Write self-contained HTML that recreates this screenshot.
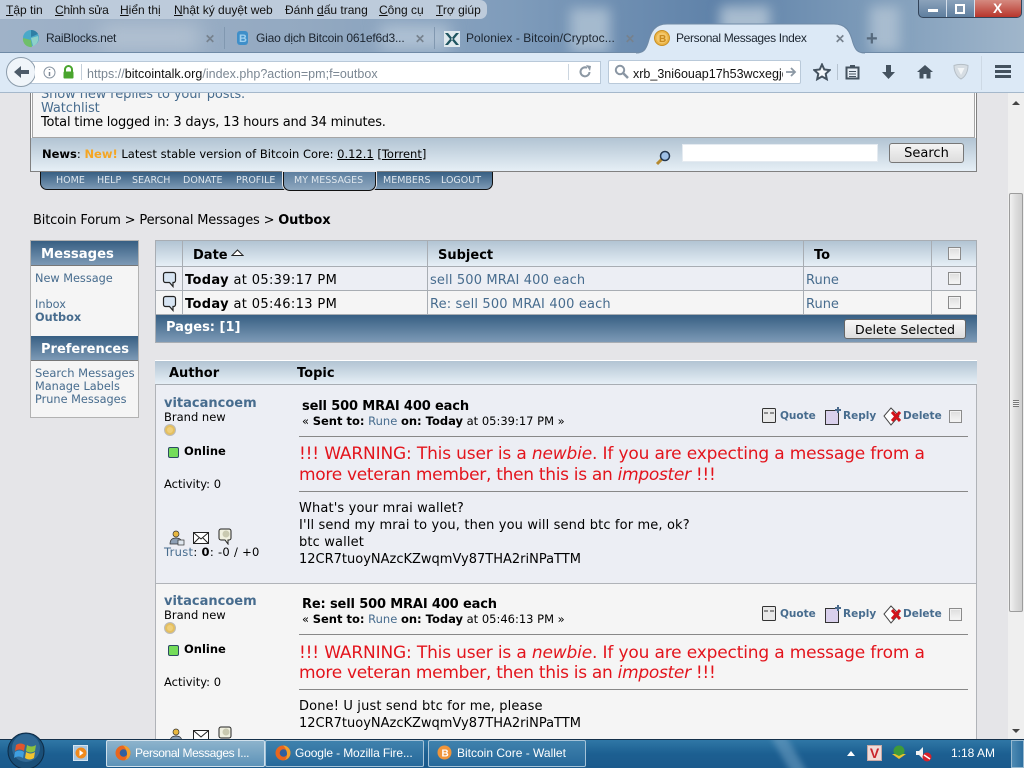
<!DOCTYPE html>
<html><head><meta charset="utf-8"><title>Personal Messages Index</title>
<style>
html,body{margin:0;padding:0;width:1024px;height:768px;overflow:hidden;background:#e5e5e8}
#r{position:relative;width:1024px;height:768px;overflow:hidden;font-family:"DejaVu Sans","Liberation Sans",sans-serif;font-size:13px;color:#000}
.a{position:absolute;white-space:nowrap}
.b{position:absolute}
.c{font-family:"Liberation Sans","Noto Sans CJK SC",sans-serif}
.l{color:#476c8e}
.g{font-weight:bold}
.hd{background:linear-gradient(#b2c4d3,#e6eff6)}
.dk{background:linear-gradient(#375f83,#7d9ab6)}
.cb{position:absolute;width:11px;height:11px;border:1px solid #8b8b8b;background:linear-gradient(#ddd,#f6f6f6);box-shadow:inset 0 0 0 1px #f2f2f2}
.tab{font-size:12px;color:#1c2530}
.x{position:absolute;font-size:12px;font-weight:bold;color:#76818d;font-family:"Liberation Sans",sans-serif}
.m{font-size:12px;color:#111;top:3px}
.nv{font-size:9.5px;color:#dfe7ee;top:175px}
u{text-decoration:underline}
.w{color:#e3141c;font-size:17px}
.act{font-size:10.5px;font-weight:bold;color:#476c8e}
.sb{font-size:11.3px;color:#476c8e}
.s1{letter-spacing:-.16px}
.s2{letter-spacing:-.29px}
.bd{letter-spacing:.14px}
.tm{letter-spacing:.35px}
.sj{letter-spacing:.15px}
</style></head><body><div id="r">

<!-- window chrome background -->
<div class="b" style="left:0;top:0;width:1024px;height:53px;background:linear-gradient(90deg,#9fb2c8 0,#93a9c1 30%,#7f9cbb 50%,#5f82a9 70%,#7d9bb9 85%,#a0b6cb 100%);overflow:hidden">
 <div class="b" style="left:570px;top:8px;width:40px;height:45px;background:#a5bace;filter:blur(6px)"></div>
 <div class="b" style="left:720px;top:6px;width:50px;height:45px;background:#a8bccf;filter:blur(6px)"></div>
 <div class="b" style="left:870px;top:6px;width:30px;height:45px;background:#a8bccf;filter:blur(6px)"></div>
 <div class="b" style="left:380px;top:25px;width:70px;height:25px;background:#b0c2d4;filter:blur(8px)"></div>
 <div class="b" style="left:100px;top:25px;width:100px;height:25px;background:#b3c2d2;filter:blur(10px)"></div>
</div>
<div class="b" style="left:0;top:0;width:487px;height:19px;background:#bdcbdb;border-radius:0 7px 7px 0"></div>
<span class="a c m" style="left:6px"><u>T</u>ập tin</span>
<span class="a c m" style="left:55px;letter-spacing:-.2px"><u>C</u>hỉnh sửa</span>
<span class="a c m" style="left:120px"><u>H</u>iển thị</span>
<span class="a c m" style="left:174px"><u>N</u>hật ký duyệt web</span>
<span class="a c m" style="left:285px">Đánh <u>d</u>ấu trang</span>
<span class="a c m" style="left:379px"><u>C</u>ông cụ</span>
<span class="a c m" style="left:436px"><u>T</u>rợ giúp</span>

<!-- window controls -->
<div class="b" style="left:918px;top:0;width:102px;height:17px;border:1px solid #33445a;border-top:0;border-radius:0 0 5px 5px;background:linear-gradient(#8ba2bb,#5f7f9f);overflow:hidden">
 <div class="b" style="left:27px;top:0;width:1px;height:17px;background:#d5deea"></div>
 <div class="b" style="left:55px;top:0;width:1px;height:17px;background:#d5deea"></div>
 <div class="b" style="left:56px;top:0;width:46px;height:17px;background:linear-gradient(#d58a80,#b8362c)"></div>
 <div class="b" style="left:9px;top:9px;width:10px;height:3px;background:#fff"></div>
 <div class="b" style="left:36px;top:4px;width:6px;height:6px;border:2px solid #fff;background:#7d94ad"></div>
 <span class="a c" style="left:74px;top:0;color:#fff;font-weight:bold;font-size:14px">X</span>
</div>

<!-- tabs -->
<svg class="b" style="left:22px;top:29px" width="19" height="19" viewBox="0 0 19 19"><circle cx="9" cy="9" r="8" fill="#4aa9c9"/><path d="M9 1a8 8 0 0 1 7 4L9 8z" fill="#2f7fa5"/><path d="M1 9l8 2 1 7a8 8 0 0 1-9-9z" fill="#6fbf6a"/><path d="M9 9l7-2a8 8 0 0 1-5 10z" fill="#8ed1c9"/></svg>
<span class="a c tab" style="left:46px;top:31px;letter-spacing:-.25px">RaiBlocks.net</span>
<span class="x" style="left:205px;top:32px">✕</span>
<div class="b" style="left:224px;top:27px;width:1px;height:22px;background:#8198b0"></div>
<svg class="b" style="left:236px;top:30px" width="14" height="16"><rect x="1" y="1" width="11" height="14" rx="3" fill="#3f8fc9"/><text x="3" y="12" font-size="11" font-weight="bold" fill="#9fd0ef" font-family="Liberation Sans">B</text></svg>
<span class="a c tab" style="left:256px;top:31px;letter-spacing:-.17px">Giao dịch Bitcoin 061ef6d3...</span>
<span class="x" style="left:415px;top:32px">✕</span>
<div class="b" style="left:434px;top:27px;width:1px;height:22px;background:#8198b0"></div>
<svg class="b" style="left:444px;top:31px" width="16" height="16"><rect width="16" height="16" fill="#dfe9ee"/><path d="M1 2l5 6-5 6h3l5-6-5-6zM15 2l-5 6 5 6h-3L7 8l5-6z" fill="#1f5560"/></svg>
<span class="a c tab" style="left:466px;top:31px;letter-spacing:.05px">Poloniex - Bitcoin/Cryptoc...</span>
<span class="x" style="left:625px;top:32px">✕</span>
<span class="a c" style="left:866px;top:28px;font-size:20px;font-weight:bold;color:#56697c">+</span>

<!-- nav bar -->
<div class="b" style="left:0;top:52px;width:1024px;height:41px;background:#dce9f6;border-top:1px solid #6f8aa6;border-bottom:1px solid #a5b8cb;box-sizing:border-box;z-index:1"></div>
<div class="b" style="z-index:2;left:0;top:0;width:1024px;height:93px;pointer-events:none">
 <svg class="b" style="left:636px;top:23px" width="230" height="31"><path d="M0 30C8 30 10 26 12 20C15 8 19 1 31 1H198C210 1 214 8 217 20C219 26 221 30 229 30V31H0Z" fill="#dce9f6"/><path d="M0 30C8 30 10 26 12 20C15 8 19 1 31 1H198C210 1 214 8 217 20C219 26 221 30 229 30" fill="none" stroke="#6f8aa6"/></svg>
 <svg class="b" style="left:654px;top:30px" width="16" height="16"><circle cx="8" cy="8" r="7.500" fill="#eab345" stroke="#c98f22"/><circle cx="8" cy="8" r="5.500" fill="#f3c76a"/><text x="5" y="12" font-size="10" font-weight="bold" fill="#c98a1e" font-family="Liberation Sans">B</text></svg>
 <span class="a c tab" style="left:676px;top:31px;letter-spacing:-.33px">Personal Messages Index</span>
 <span class="x" style="left:835px;top:32px">✕</span>
 <div class="b" style="left:20px;top:61px;width:548px;height:21px;background:#fff;border:1px solid #b9c9d9;border-radius:2px"></div>
 <div class="b" style="left:568px;top:61px;width:32px;height:21px;background:#fff;border:1px solid #b9c9d9;border-left:0;box-sizing:content-box"></div>
 <div class="b" style="left:568px;top:64px;width:1px;height:16px;background:#ccd6e0"></div>
 <svg class="b" style="left:5px;top:56px" width="30" height="32"><circle cx="16" cy="16" r="14.500" fill="#f0f5fa" stroke="#8c9cab"/><path d="M9 16l7-6v4h8v4h-8v4z" fill="#4d5b69"/></svg>
 <svg class="b" style="left:43px;top:66px" width="13" height="13"><circle cx="6.500" cy="6.500" r="5.500" fill="#fff" stroke="#8a96a3"/><path d="M6.500 3v1M6.500 6v4" stroke="#7a8693" stroke-width="1.500"/></svg>
 <svg class="b" style="left:62px;top:65px" width="13" height="14"><path d="M3 7V4.500a3.500 3.500 0 0 1 7 0V7" fill="none" stroke="#4aa52e" stroke-width="2"/><rect x="1.500" y="6.500" width="10" height="7" rx="1" fill="#4aa52e"/></svg>
 <div class="b" style="left:81px;top:64px;width:1px;height:16px;background:#c3ced9"></div>
 <span class="a c" style="left:87px;top:67px;font-size:12.500px;letter-spacing:.03px;color:#7b8793">https://<span style="color:#111">bitcointalk.org</span>/index.php?action=pm;f=outbox</span>
 <svg class="b" style="left:578px;top:65px" width="14" height="14"><path d="M11.500 7A4.500 4.500 0 1 1 9 2.800" fill="none" stroke="#8c98a4" stroke-width="2"/><path d="M8 0l5 1-1 5z" fill="#8c98a4"/></svg>
 <div class="b" style="left:608px;top:60px;width:191px;height:22px;background:#fff;border:1px solid #b9c9d9;border-radius:2px"></div>
 <svg class="b" style="left:614px;top:64px" width="16" height="15"><circle cx="6" cy="6" r="4.200" fill="none" stroke="#8a96a3" stroke-width="2"/><path d="M9 9l5 5" stroke="#8a96a3" stroke-width="2.500"/></svg>
 <span class="a c" style="left:633px;top:67px;width:150px;overflow:hidden;font-size:12.500px;color:#111">xrb_3ni6ouap17h53wcxegjd7</span>
 <svg class="b" style="left:785px;top:66px" width="12" height="12"><path d="M1 6h8M6 2l4 4-4 4" fill="none" stroke="#8c98a4" stroke-width="1.800"/></svg>
 <svg class="b" style="left:813px;top:63px" width="18" height="18" viewBox="0 0 18 18"><path d="M9 1.500l2.300 5 5.400.6-4 3.700 1.100 5.400L9 13.500 4.200 16.200l1.100-5.400-4-3.700 5.400-.6z" fill="#f3f7fb" stroke="#44525f" stroke-width="2"/></svg>
 <div class="b" style="left:837px;top:64px;width:1px;height:16px;background:#b7c4d1"></div>
 <svg class="b" style="left:845px;top:64px" width="15" height="16"><path d="M1.500 3.500h12v11h-12z" fill="#e6eef6" stroke="#44525f" stroke-width="2"/><rect x="5" y="1" width="5" height="3" fill="#44525f"/><path d="M4 7.500h7M4 10h7M4 12.500h7" stroke="#44525f"/></svg>
 <svg class="b" style="left:881px;top:64px" width="15" height="16"><path d="M5 1h5v7h4l-6.500 7L1 8h4z" fill="#44525f"/></svg>
 <svg class="b" style="left:917px;top:64px" width="16" height="15"><path d="M8 1L0 8h2.500v6.500h4V10h3v4.500h4V8H16z" fill="#44525f"/></svg>
 <svg class="b" style="left:953px;top:63px" width="16" height="17"><path d="M1 2.500C5 1 11 1 15 2.500 15 9 12 14 8 16 4 14 1 9 1 2.500z" fill="#d6dde3" stroke="#b5bec6"/><path d="M4.500 5h7L8 12z" fill="#f2f5f7"/></svg>
 <div class="b" style="left:981px;top:56px;width:1px;height:34px;background:#cdd9e5"></div>
 <div class="b" style="left:995px;top:65px;width:16px;height:3px;background:#44525f"></div>
 <div class="b" style="left:995px;top:70px;width:16px;height:3px;background:#44525f"></div>
 <div class="b" style="left:995px;top:75px;width:16px;height:3px;background:#44525f"></div>
</div>

<!-- scrollbar -->
<div class="b" style="left:1008px;top:93px;width:16px;height:646px;background:#efefef"></div>
<div class="b" style="left:1009px;top:193px;width:14px;height:419px;background:linear-gradient(90deg,#f1f1f1,#dcdcdc,#cfcfcf);border:1px solid #9c9c9c;border-radius:2px;box-sizing:border-box"></div>
<div class="b" style="left:1013px;top:400px;width:6px;height:7px;background:repeating-linear-gradient(#777 0 1px,#eee 1px 2px)"></div>
<div class="b" style="left:1012px;top:101px;border:4px solid transparent;border-top:0;border-bottom:4px solid #444"></div>
<div class="b" style="left:1012px;top:729px;border:4px solid transparent;border-bottom:0;border-top:4px solid #444"></div>

<!-- top user box -->
<div class="b" style="left:30px;top:93px;width:947px;height:79px;background:#fff;border:1px solid #808080;border-top:0;box-sizing:border-box"></div>
<div class="b" style="left:32px;top:93px;width:943px;height:45px;background:#f5f5f5;border-left:1px solid #a5a5a5;border-right:1px solid #a5a5a5;border-bottom:1px solid #a5a5a5;box-sizing:border-box;overflow:hidden">
 <span class="a l" style="left:8px;top:-6px;letter-spacing:-.1px">Show new replies to your posts.</span>
 <span class="a l" style="left:8px;top:8px;letter-spacing:-.1px">Watchlist</span>
 <span class="a" style="left:8px;top:22px;letter-spacing:-.2px">Total time logged in: 3 days, 13 hours and 34 minutes.</span>
</div>
<div class="b hd" style="left:31px;top:138px;width:945px;height:33px"></div>
<span class="a" style="left:42px;top:147px;font-size:11.500px"><b>News</b>: <b style="color:#f5a623">New!</b> Latest stable version of Bitcoin Core: <u>0.12.1</u> [<u>Torrent</u>]</span>
<svg class="b" style="left:655px;top:149px" width="16" height="17"><path d="M2 15l6-6" stroke="#b5892f" stroke-width="3"/><circle cx="10" cy="7" r="4.500" fill="#9fc0e6" stroke="#24374f" stroke-width="1.500"/></svg>
<div class="b" style="left:682px;top:144px;width:196px;height:18px;background:#fff;border:1px solid #e5ebf1;box-sizing:border-box"></div>
<div class="b" style="left:889px;top:143px;width:75px;height:20px;background:linear-gradient(#f4f4f4,#ddd);border:1px solid #777;border-radius:3px;box-sizing:border-box;text-align:center;line-height:20px">Search</div>

<!-- menu -->
<div class="b dk" style="left:40px;top:172px;width:453px;height:18px;border:1px solid #111;border-top:0;border-radius:0 0 7px 7px;box-sizing:border-box"></div>
<div class="b" style="left:283px;top:172px;width:93px;height:19px;background:linear-gradient(#5d7f9f,#8ea7bf);border:1px solid #111;border-top:0;border-radius:0 0 7px 7px;box-sizing:border-box;box-shadow:0 0 0 1px #e5e5e8"></div>
<span class="a nv" style="left:56px">HOME</span>
<span class="a nv" style="left:97px">HELP</span>
<span class="a nv" style="left:132px">SEARCH</span>
<span class="a nv" style="left:183px">DONATE</span>
<span class="a nv" style="left:236px">PROFILE</span>
<span class="a nv" style="left:294px">MY MESSAGES</span>
<span class="a nv" style="left:383px">MEMBERS</span>
<span class="a nv" style="left:441px">LOGOUT</span>

<!-- breadcrumb -->
<span class="a" style="left:33px;top:213px;letter-spacing:-.17px">Bitcoin Forum &gt; Personal Messages &gt; <b>Outbox</b></span>

<!-- sidebar -->
<div class="b" style="left:30px;top:240px;width:109px;height:178px;background:#f5f5f5;border:1px solid #b2b2b2;box-sizing:border-box"></div>
<div class="b dk" style="left:31px;top:241px;width:107px;height:25px;border-bottom:1px solid #777;box-sizing:border-box"></div>
<span class="a g" style="left:41px;top:247px;color:#fff;font-size:13.200px">Messages</span>
<div class="b dk" style="left:31px;top:336px;width:107px;height:25px;border-bottom:1px solid #777;box-sizing:border-box"></div>
<span class="a g" style="left:41px;top:342px;color:#fff;font-size:13px">Preferences</span>
<span class="a sb" style="left:35px;top:272px">New Message</span>
<span class="a sb" style="left:35px;top:298px">Inbox</span>
<span class="a sb g" style="left:35px;top:311px">Outbox</span>
<span class="a sb" style="left:35px;top:366px;font-size:11.500px">Search Messages</span>
<span class="a sb" style="left:35px;top:380px">Manage Labels</span>
<span class="a sb" style="left:35px;top:393px">Prune Messages</span>

<!-- PM table -->
<div class="b" style="left:155px;top:240px;width:822px;height:103px;background:#a8adb3"></div>
<div class="b hd" style="left:156px;top:241px;width:820px;height:25px"></div>
<div class="b" style="left:156px;top:267px;width:820px;height:23px;background:#eceef4"></div>
<div class="b" style="left:156px;top:291px;width:820px;height:23px;background:#f5f5f5"></div>
<div class="b dk" style="left:156px;top:315px;width:821px;height:27px"></div>
<div class="b" style="left:182px;top:241px;width:1px;height:74px;background:#a8adb3"></div>
<div class="b" style="left:427px;top:241px;width:1px;height:74px;background:#a8adb3"></div>
<div class="b" style="left:803px;top:241px;width:1px;height:74px;background:#a8adb3"></div>
<div class="b" style="left:931px;top:241px;width:1px;height:74px;background:#a8adb3"></div>
<span class="a g" style="left:193px;top:248px">Date</span>
<svg class="b" style="left:231px;top:249px" width="13" height="8"><path d="M1 6.500L6.500 1 12 6.500z" fill="#fff" stroke="#222"/></svg>
<span class="a g" style="left:438px;top:248px">Subject</span>
<span class="a g" style="left:814px;top:248px">To</span>
<div class="cb" style="left:948px;top:247px"></div>
<svg class="b" style="left:162px;top:271px" width="15" height="17"><path d="M3.500 1.500h8a2 2 0 0 1 2 2v6a2 2 0 0 1-2 2H11v4l-3.500-4h-4a2 2 0 0 1-2-2v-6a2 2 0 0 1 2-2z" fill="#d7e4f2" stroke="#222" stroke-width="1.200"/></svg>
<svg class="b" style="left:162px;top:295px" width="15" height="17"><path d="M3.500 1.500h8a2 2 0 0 1 2 2v6a2 2 0 0 1-2 2H11v4l-3.500-4h-4a2 2 0 0 1-2-2v-6a2 2 0 0 1 2-2z" fill="#d7e4f2" stroke="#222" stroke-width="1.200"/></svg>
<span class="a tm" style="left:185px;top:273px"><b>Today</b> at 05:39:17 PM</span>
<span class="a tm" style="left:185px;top:297px"><b>Today</b> at 05:46:13 PM</span>
<span class="a l sj" style="left:430px;top:273px">sell 500 MRAI 400 each</span>
<span class="a l sj" style="left:430px;top:297px">Re: sell 500 MRAI 400 each</span>
<span class="a l" style="left:806px;top:273px">Rune</span>
<span class="a l" style="left:806px;top:297px">Rune</span>
<div class="cb" style="left:948px;top:272px"></div>
<div class="cb" style="left:948px;top:296px"></div>
<span class="a g" style="left:166px;top:320px;color:#fff">Pages: [1]</span>
<div class="b" style="left:844px;top:319px;width:122px;height:20px;background:linear-gradient(#f8f8f8,#ddd);border:1px solid #666;border-radius:3px;box-sizing:border-box;text-align:center;line-height:20px;font-size:12.600px">Delete Selected</div>

<!-- author bar -->
<div class="b hd" style="left:155px;top:360px;width:822px;height:24px;border-top:1px solid #fff;box-sizing:border-box"></div>
<span class="a g" style="left:169px;top:366px">Author</span>
<span class="a g" style="left:297px;top:366px">Topic</span>

<!-- posts -->
<div class="b" style="left:155px;top:384px;width:822px;height:200px;background:#eceef4;border:1px solid #b0b3b8;border-top:1px solid #a8adb3;box-sizing:border-box"></div>
<div class="b" style="left:155px;top:583px;width:822px;height:157px;background:#f5f5f5;border:1px solid #b0b3b8;border-bottom:0;box-sizing:border-box"></div>

<!-- post 1 -->
<span class="a g l" style="left:164px;top:396px">vitacancoem</span>
<span class="a" style="left:164px;top:410px;font-size:11.500px">Brand new</span>
<svg class="b" style="left:164px;top:424px" width="12" height="12"><circle cx="6" cy="6" r="5.500" fill="#e4bf60" stroke="#bbb"/><circle cx="6" cy="6" r="3" fill="#efcf7a"/></svg>
<div class="b" style="left:168px;top:447px;width:9px;height:9px;background:#74dc5a;border:1.500px solid #2c4a63;border-radius:2px"></div>
<span class="a g" style="left:184px;top:444px;font-size:11.500px">Online</span>
<span class="a" style="left:164px;top:477px;font-size:11.500px">Activity: 0</span>
<svg class="b" style="left:169px;top:530px" width="16" height="16"><circle cx="7" cy="4" r="3" fill="#e8b73f" stroke="#333" stroke-width=".7"/><path d="M1 14c0-5 3-6 6-6s6 1 6 6z" fill="#8d9fb4" stroke="#333" stroke-width=".7"/><rect x="9" y="10" width="6" height="5" fill="#dfe7ef" stroke="#333" stroke-width=".7"/></svg>
<svg class="b" style="left:193px;top:532px" width="17" height="13"><rect x=".5" y=".5" width="15" height="11" fill="#fff" stroke="#222"/><path d="M1 1l7 6 7-6M1 11l5-5M15 11l-5-5" fill="none" stroke="#222"/></svg>
<svg class="b" style="left:218px;top:528px" width="15" height="17"><path d="M3 1h8a2 2 0 0 1 2 2v7a2 2 0 0 1-2 2h-1v4l-3-4H3a2 2 0 0 1-2-2V3a2 2 0 0 1 2-2z" fill="#f0f0e0" stroke="#222"/><circle cx="8" cy="6" r="3.500" fill="#c9c9b0"/></svg>
<span class="a" style="left:164px;top:545px;font-size:11.500px;letter-spacing:.3px"><span class="l">Trust</span>: <b>0</b>: -0 / +0</span>

<span class="a g" style="left:302px;top:399px;letter-spacing:-.15px">sell 500 MRAI 400 each</span>
<span class="a" style="left:302px;top:414px;font-size:11.500px">« <b>Sent to:</b> <span class="l">Rune</span> <b>on: Today</b> at 05:39:17 PM »</span>
<svg class="b" style="left:762px;top:408px" width="14" height="16"><rect x=".5" y=".5" width="13" height="14" rx="1" fill="#e8e8e8" stroke="#333"/><path d="M3 4v2M5 4v2M9 4v2M11 4v2" stroke="#333"/></svg>
<span class="a act" style="left:780px;top:410px">Quote</span>
<svg class="b" style="left:825px;top:406px" width="18" height="19"><path d="M.5 4.500h10l3 0v14H.5z" fill="#d9d0ec" stroke="#333"/><path d="M13 1v6M10 4h6" stroke="#4a6a8c" stroke-width="2"/></svg>
<span class="a act" style="left:843px;top:410px">Reply</span>
<svg class="b" style="left:883px;top:407px" width="20" height="20"><path d="M8 1L1 9l7 9 8-9z" fill="#fff" stroke="#444"/><path d="M9 5l8 9M17 5l-8 9" stroke="#d2121a" stroke-width="3"/></svg>
<span class="a act" style="left:903px;top:410px">Delete</span>
<div class="cb" style="left:949px;top:410px"></div>
<div class="b" style="left:299px;top:436px;width:669px;height:1px;background:#888"></div>
<span class="a w s1" style="left:299px;top:444px">!!! WARNING: This user is a <i>newbie</i>. If you are expecting a message from a</span>
<span class="a w s2" style="left:299px;top:465px">more veteran member, then this is an <i>imposter</i> !!!</span>
<div class="b" style="left:299px;top:491px;width:669px;height:1px;background:#888"></div>
<span class="a bd" style="left:299px;top:501px">What's your mrai wallet?</span>
<span class="a bd" style="left:299px;top:518px">I'll send my mrai to you, then you will send btc for me, ok?</span>
<span class="a bd" style="left:299px;top:535px">btc wallet</span>
<span class="a" style="left:299px;top:552px">12CR7tuoyNAzcKZwqmVy87THA2riNPaTTM</span>

<!-- post 2 -->
<span class="a g l" style="left:164px;top:594px">vitacancoem</span>
<span class="a" style="left:164px;top:608px;font-size:11.500px">Brand new</span>
<svg class="b" style="left:164px;top:622px" width="12" height="12"><circle cx="6" cy="6" r="5.500" fill="#e4bf60" stroke="#bbb"/><circle cx="6" cy="6" r="3" fill="#efcf7a"/></svg>
<div class="b" style="left:168px;top:645px;width:9px;height:9px;background:#74dc5a;border:1.500px solid #2c4a63;border-radius:2px"></div>
<span class="a g" style="left:184px;top:642px;font-size:11.500px">Online</span>
<span class="a" style="left:164px;top:675px;font-size:11.500px">Activity: 0</span>
<svg class="b" style="left:169px;top:728px" width="16" height="16"><circle cx="7" cy="4" r="3" fill="#e8b73f" stroke="#333" stroke-width=".7"/><path d="M1 14c0-5 3-6 6-6s6 1 6 6z" fill="#8d9fb4" stroke="#333" stroke-width=".7"/></svg>
<svg class="b" style="left:193px;top:730px" width="17" height="13"><rect x=".5" y=".5" width="15" height="11" fill="#fff" stroke="#222"/><path d="M1 1l7 6 7-6" fill="none" stroke="#222"/></svg>
<svg class="b" style="left:218px;top:726px" width="15" height="17"><path d="M3 1h8a2 2 0 0 1 2 2v7a2 2 0 0 1-2 2H3a2 2 0 0 1-2-2V3a2 2 0 0 1 2-2z" fill="#f0f0e0" stroke="#222"/><circle cx="8" cy="6" r="3.500" fill="#c9c9b0"/></svg>

<span class="a g" style="left:302px;top:597px;letter-spacing:-.15px">Re: sell 500 MRAI 400 each</span>
<span class="a" style="left:302px;top:612px;font-size:11.500px">« <b>Sent to:</b> <span class="l">Rune</span> <b>on: Today</b> at 05:46:13 PM »</span>
<svg class="b" style="left:762px;top:606px" width="14" height="16"><rect x=".5" y=".5" width="13" height="14" rx="1" fill="#e8e8e8" stroke="#333"/><path d="M3 4v2M5 4v2M9 4v2M11 4v2" stroke="#333"/></svg>
<span class="a act" style="left:780px;top:608px">Quote</span>
<svg class="b" style="left:825px;top:604px" width="18" height="19"><path d="M.5 4.500h10l3 0v14H.5z" fill="#d9d0ec" stroke="#333"/><path d="M13 1v6M10 4h6" stroke="#4a6a8c" stroke-width="2"/></svg>
<span class="a act" style="left:843px;top:608px">Reply</span>
<svg class="b" style="left:883px;top:605px" width="20" height="20"><path d="M8 1L1 9l7 9 8-9z" fill="#fff" stroke="#444"/><path d="M9 5l8 9M17 5l-8 9" stroke="#d2121a" stroke-width="3"/></svg>
<span class="a act" style="left:903px;top:608px">Delete</span>
<div class="cb" style="left:949px;top:608px"></div>
<div class="b" style="left:299px;top:634px;width:669px;height:1px;background:#888"></div>
<span class="a w s1" style="left:299px;top:643px">!!! WARNING: This user is a <i>newbie</i>. If you are expecting a message from a</span>
<span class="a w s2" style="left:299px;top:663px">more veteran member, then this is an <i>imposter</i> !!!</span>
<div class="b" style="left:299px;top:689px;width:669px;height:1px;background:#888"></div>
<span class="a bd" style="left:299px;top:699px">Done! U just send btc for me, please</span>
<span class="a" style="left:299px;top:716px">12CR7tuoyNAzcKZwqmVy87THA2riNPaTTM</span>

<!-- taskbar -->
<div class="b" style="left:0;top:739px;width:1024px;height:29px;background:linear-gradient(#2f77a6,#1c5f91 50%,#1b5a8c);border-top:1px solid #14304a;box-sizing:border-box;overflow:hidden">
 <div class="b" style="left:785px;top:-10px;width:14px;height:60px;background:#6f9fc2;opacity:.55;transform:rotate(-30deg);filter:blur(3px)"></div>
</div>
<svg class="b" style="left:7px;top:732px" width="38" height="36" viewBox="0 0 38 36"><circle cx="19" cy="19" r="18" fill="#1a4f78" stroke="#0d2a44"/><circle cx="19" cy="16" r="14" fill="#3f7aa6" opacity=".6"/><path d="M9 13c3-2 6-2 9 0l-1 6c-3-2-6-2-9 0z" fill="#e2552c"/><path d="M20 13c3 2 6 2 9 0l-1 6c-3 2-6 2-9 0z" fill="#8cc13f"/><path d="M8 20c3-2 6-2 9 0l-1 6c-3-2-6-2-9 0z" fill="#3f9fe0"/><path d="M19 20c3 2 6 2 9 0l-1 6c-3 2-6 2-9 0z" fill="#f3c32f"/></svg>
<div class="b" style="left:73px;top:745px;width:15px;height:16px;background:#a7c6e0;border:1px solid #d6e5f0;box-sizing:border-box"></div>
<svg class="b" style="left:75px;top:747px" width="12" height="12"><circle cx="6" cy="6" r="5.500" fill="#f08a1c"/><path d="M4.500 3l4 3-4 3z" fill="#fff"/></svg>
<div class="b" style="left:106px;top:740px;width:159px;height:27px;background:linear-gradient(#8db3cc,#5d93b8);border:1px solid #cfe0ec;border-radius:2px;box-sizing:border-box"></div>
<div class="b" style="left:265px;top:740px;width:159px;height:27px;background:linear-gradient(#3f82ad,#27699a);border:1px solid #a5c3d8;border-radius:2px;box-sizing:border-box"></div>
<div class="b" style="left:428px;top:740px;width:158px;height:27px;background:linear-gradient(#3f82ad,#27699a);border:1px solid #a5c3d8;border-radius:2px;box-sizing:border-box"></div>
<svg class="b" style="left:115px;top:745px" width="16" height="16"><circle cx="8" cy="8" r="7.500" fill="#e8661f"/><circle cx="8.500" cy="8" r="3.800" fill="#2f5f9f"/><path d="M8 .5A7.500 7.500 0 0 1 15.500 8 7.500 7.500 0 0 1 10 15C13 12 13 5 8 .5z" fill="#f3a02c"/></svg>
<svg class="b" style="left:275px;top:745px" width="16" height="16"><circle cx="8" cy="8" r="7.500" fill="#e8661f"/><circle cx="8.500" cy="8" r="3.800" fill="#2f5f9f"/><path d="M8 .5A7.500 7.500 0 0 1 15.500 8 7.500 7.500 0 0 1 10 15C13 12 13 5 8 .5z" fill="#f3a02c"/></svg>
<svg class="b" style="left:437px;top:745px" width="15" height="15"><circle cx="7.500" cy="7.500" r="7" fill="#f0953a"/><text x="4.500" y="11.500" font-size="10" font-weight="bold" fill="#fff" font-family="Liberation Sans">B</text></svg>
<span class="a c" style="left:135px;top:746px;font-size:12px;letter-spacing:-.36px;color:#fff">Personal Messages I...</span>
<span class="a c" style="left:295px;top:746px;font-size:12px;letter-spacing:-.13px;color:#fff">Google - Mozilla Fire...</span>
<span class="a c" style="left:457px;top:746px;font-size:12px;color:#fff">Bitcoin Core - Wallet</span>
<div class="b" style="left:847px;top:751px;border:4px solid transparent;border-top:0;border-bottom:5px solid #fff"></div>
<div class="b" style="left:867px;top:745px;width:15px;height:16px;background:#f1dbd8;border:1px solid #c9a9a4;box-sizing:border-box;color:#c9242c;font:bold 14px/14px 'Liberation Sans';text-align:center">V</div>
<svg class="b" style="left:890px;top:745px" width="18" height="15"><circle cx="9" cy="6" r="5.500" fill="#3f9a3a"/><path d="M2 9l7 5 7-5-3 0-4 2-4-2z" fill="#e8c22f"/></svg>
<svg class="b" style="left:915px;top:746px" width="18" height="16"><path d="M1 5h3l4-4v12L4 9H1z" fill="#f2f2f2"/><circle cx="12" cy="11" r="4.500" fill="#d8212a"/><path d="M9 9l6 4" stroke="#fff" stroke-width="1.500"/></svg>
<span class="a c" style="left:951px;top:746px;font-size:12px;color:#fff">1:18 AM</span>
<div class="b" style="left:1011px;top:740px;width:13px;height:28px;background:linear-gradient(90deg,#4d8ab3,#2e6f9f);border:1px solid #97b9d0;box-sizing:border-box"></div>
</div></body></html>
